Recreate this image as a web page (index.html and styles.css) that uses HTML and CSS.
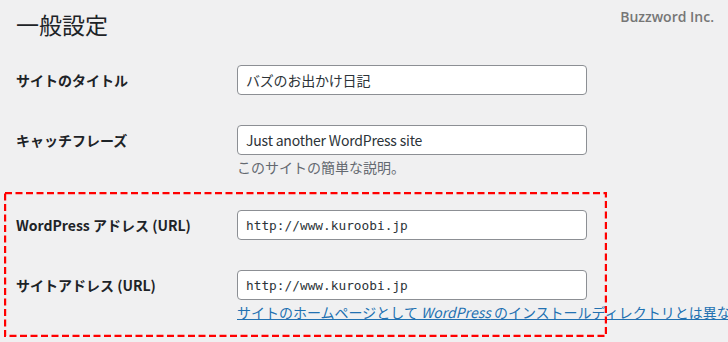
FILE: index.html
```html
<!DOCTYPE html>
<html lang="ja">
<head>
    <meta charset="UTF-8">
    <meta name="viewport" content="width=device-width, initial-scale=1.0">
    <title>一般設定</title>
    <link rel="stylesheet" href="styles.css">
</head>
<body>

    <div class="brand">Buzzword Inc.</div>

    <h1 class="page-title">一般設定</h1>

    <div class="settings">
        <div class="row">
            <label class="row-label" for="blogname">サイトのタイトル</label>
            <div class="row-field">
                <input class="text-input" type="text" id="blogname" value="バズのお出かけ日記">
            </div>
        </div>

        <div class="row">
            <label class="row-label" for="blogdescription">キャッチフレーズ</label>
            <div class="row-field">
                <input class="text-input" type="text" id="blogdescription" value="Just another WordPress site">
                <p class="description">このサイトの簡単な説明。</p>
            </div>
        </div>

        <div class="highlight">
            <div class="row">
                <label class="row-label" for="siteurl">WordPress アドレス (URL)</label>
                <div class="row-field">
                    <input class="text-input code" type="url" id="siteurl" value="http://www.kuroobi.jp">
                </div>
            </div>

            <div class="row">
                <label class="row-label" for="home">サイトアドレス (URL)</label>
                <div class="row-field">
                    <input class="text-input code" type="url" id="home" value="http://www.kuroobi.jp">
                    <p class="description"><a href="#home">サイトのホームページとして <em>WordPress</em> のインストールディレクトリとは異なる場所を設定する場合は、ここにアドレスを入力してください</a>。</p>
                </div>
            </div>

            <svg class="highlight-frame" width="603" height="145" viewBox="0 0 603 145">
                <rect x="1" y="1" width="601" height="143" fill="none" stroke="#f00" stroke-width="2.4" stroke-dasharray="7 3.5"/>
            </svg>
        </div>
    </div>

</body>
</html>
```

FILE: styles.css
```css
html, body {
    margin: 0;
    height: 100%;
    overflow: hidden;
}
body {
    background-color: #f0f0f1;
    color: #1d2327;
    font-family: "Noto Sans CJK JP", "Noto Sans", sans-serif;
    font-size: 14px;
    position: relative;
}
.brand {
    position: absolute;
    top: 7px;
    right: 14px;
    font-family: "Open Sans", sans-serif;
    font-weight: 600;
    font-size: 14px;
    line-height: 20px;
    color: #767676;
}
.page-title {
    margin: 0;
    padding: 9px 0 11px 16px;
    font-size: 23px;
    font-weight: 400;
    line-height: 30px;
}
.settings {
    padding-left: 16px;
}
.row {
    display: flex;
    padding: 15px 0;
}
.row-label {
    width: 221px;
    flex-shrink: 0;
    font-weight: 700;
    line-height: 30px;
    white-space: nowrap;
}
.row-field {
    white-space: nowrap;
}
.text-input {
    display: block;
    box-sizing: border-box;
    width: 350px;
    height: 30px;
    margin: 0;
    padding: 0 8px;
    border: 1px solid #8c8f94;
    border-radius: 4px;
    background-color: #fff;
    color: #2c3338;
    font-family: "Noto Sans CJK JP", "Noto Sans", sans-serif;
    font-size: 14px;
    letter-spacing: -0.2px;
}
.text-input.code {
    font-family: "DejaVu Sans Mono", monospace;
    font-size: 12.8px;
    letter-spacing: 0;
}
.description {
    margin: 2px 0 0;
    line-height: 20px;
    color: #646970;
}
.row:has(.description) {
    padding-bottom: 18px;
}
.description a {
    color: #2271b1;
}
.highlight {
    position: relative;
}
.highlight-frame {
    position: absolute;
    top: -3px;
    left: -12px;
    pointer-events: none;
}
```
